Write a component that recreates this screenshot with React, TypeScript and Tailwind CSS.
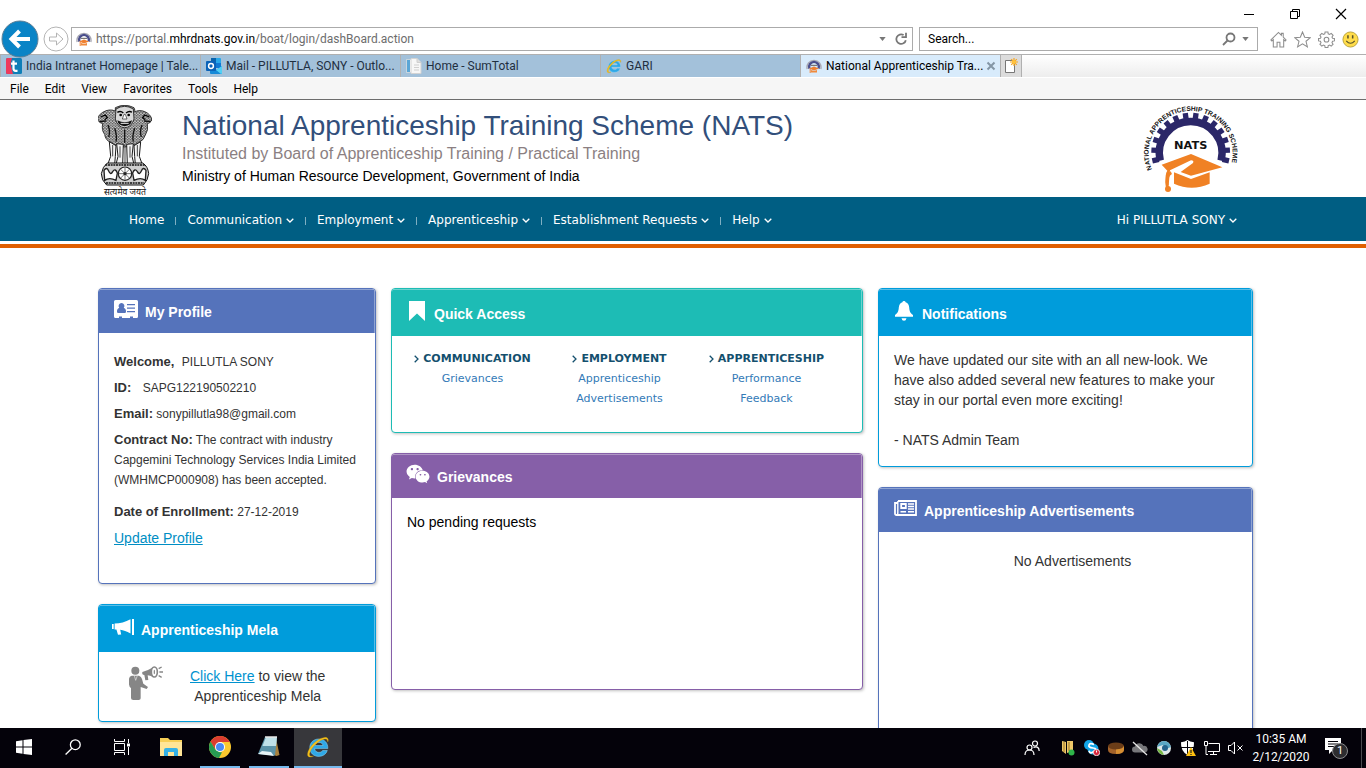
import React from "react";
import { FaWeixin } from "react-icons/fa";

const UI = "font-[Roboto,'Open_Sans',sans-serif]";

/* ---------- browser icons ---------- */

function SiteIcon() {
  return (
    <svg viewBox="0 0 16 16" className="size-4 shrink-0" aria-hidden="true">
      <path d="M1.2 11A7 7 0 1 1 14.8 11" fill="none" stroke="#a9a9b4" strokeWidth="1.4" />
      <path d="M3.4 10.5A4.9 4.9 0 1 1 12.6 10.5" fill="none" stroke="#4b4f8c" strokeWidth="2.4" />
      <path d="M5 7.4h6" stroke="#777" strokeWidth="1.2" />
      <path d="M3 10.5 8 8.6l5 2-5 2z" fill="#f08030" />
      <path d="M5 12v2.6h6V12l-3 1z" fill="#f08a3c" />
      <path d="M4.2 11v4" stroke="#f08030" strokeWidth="1" />
    </svg>
  );
}

function IeIcon({ className }: { className: string }) {
  return (
    <svg viewBox="0 0 24 24" className={className} aria-hidden="true">
      <path
        d="M21.8 13.6H8.6c.2 2.400 1.900 3.800 4.300 3.800 1.700 0 3-.6 3.700-1.900h4.700c-1.100 3.700-4.300 5.900-8.500 5.900-5.300 0-9-3.500-9-8.700 0-5.100 3.800-8.700 9-8.700 5.600 0 9.300 3.900 9 9.600zM8.700 10.500h8.300c-.3-1.900-1.800-3.100-4-3.100-2.300 0-3.900 1.200-4.300 3.100z"
        fill="#2fa8e6"
        stroke="#8fdcff"
        strokeWidth=".5"
      />
      <path
        d="M22.200 6.400C22.800 3.900 21.500 2 18.400 2.400 11 3.300 2 12.500 1.500 19c-.2 3.300 2.400 3.900 6 2.200-3 .6-4.400-.4-3.900-2.700C4.700 13.400 12.200 5.300 18 4.200c2.500-.5 3.600.4 3.400 2.200z"
        fill="#f6c21a"
        stroke="#b98a10"
        strokeWidth=".3"
      />
    </svg>
  );
}

function TalentIcon() {
  return (
    <svg viewBox="0 0 16 16" className="size-4 shrink-0" aria-hidden="true">
      <rect width="16" height="16" rx="1.500" fill="#0e7fb8" />
      <path d="M1.500 0H6l-1.500 6L7 16H1.500A1.500 1.500 0 0 1 0 14.500v-13A1.500 1.500 0 0 1 1.500 0z" fill="#ee3a5c" />
      <path d="M7.500 2.500v8q0 2.300 2.200 2.300H11.500M5 5.700h6" fill="none" stroke="#fff" strokeWidth="2.200" />
    </svg>
  );
}

function OutlookIcon() {
  return (
    <svg viewBox="0 0 16 16" className="size-4 shrink-0" aria-hidden="true">
      <rect x="5" y="0" width="10" height="10" rx="1" fill="#28a8ea" />
      <rect x="5" y="0" width="5" height="5" fill="#0a64ad" />
      <rect x="10" y="5" width="5" height="5" fill="#0f78d4" />
      <path d="M4 8l6 4 6-4v7a1 1 0 0 1-1 1H5a1 1 0 0 1-1-1z" fill="#1489d8" />
      <path d="M16 8v7a1 1 0 0 1-1 1L10 12z" fill="#50d0f5" />
      <rect x="0" y="3" width="10" height="10" rx="1" fill="#0a62b8" />
      <circle cx="5" cy="8" r="2.400" fill="none" stroke="#fff" strokeWidth="1.500" />
    </svg>
  );
}

function PagesIcon() {
  return (
    <svg viewBox="0 0 16 16" className="size-4 shrink-0" aria-hidden="true">
      <path d="M.5 1.500h7v13h-7z" fill="#fff" stroke="#c9d6df" />
      <path d="M1 2h3v12H1z" fill="#5aa6d6" />
      <path d="M5 .5h6l4 4v11H5z" fill="#f7f7f7" stroke="#d3d3d3" />
      <path d="M11 .5v4h4" fill="#ddd" stroke="#cfcfcf" />
      <path d="M8 7h5M8 9.500h5M8 12h5" stroke="#cfcfcf" />
    </svg>
  );
}

function NewTabIcon() {
  return (
    <svg viewBox="0 0 16 16" className="size-4" aria-hidden="true">
      <path d="M2.500 2.500h9v12h-9z" fill="#fff" stroke="#777" />
      <path d="M11 0v8M7 4h8M8.200 1.200l5.600 5.600M13.800 1.200 8.200 6.800" stroke="#f5a623" strokeWidth="1.200" />
      <circle cx="11" cy="4" r="2" fill="#ffc33d" />
    </svg>
  );
}

/* ---------- page drawings ---------- */

function Emblem() {
  return (
    <svg viewBox="0 0 162 276" className="h-[92px] w-[54px] shrink-0" role="img" aria-label="State Emblem of India">
      <defs>
        <pattern id="curl" width="9" height="8" patternUnits="userSpaceOnUse">
          <rect width="9" height="8" fill="#e4e4e4" />
          <path d="M0 2q3 4 5 0t4 1M1 7q2-4 4-1t4-1" stroke="#111" strokeWidth="2" fill="none" />
        </pattern>
      </defs>
      <g stroke="#1a1a1a" strokeWidth="2.500">
        <path
          d="M52 8Q80-6 108 8q4 8 2 12 20-8 38 4 16 12 12 24-4 6-12 8 4 20-6 34-4 16-20 22-10 10-22 8-20 12-40 0-14 2-22-8-16-6-18-24-10-12-6-32-10-2-14-10Q-4 34 14 22q20-12 38-4z"
          fill="url(#curl)"
        />
        <path d="M54 12q26-16 52 0l2 30q-8 26-28 26T52 42z" fill="#d8d8d8" />
      </g>
      <path d="M58 22q10-6 18 2M84 24q10-8 18-2" stroke="#000" strokeWidth="4" fill="none" />
      <circle cx="68" cy="30" r="4" />
      <circle cx="92" cy="30" r="4" />
      <path d="M78 28l-5 14h14l-5-14z" fill="#fff" stroke="#222" strokeWidth="2" />
      <path d="M58 46q22 12 44 0-2 16-22 18-20-2-22-18z" fill="#111" />
      <path d="M68 55h24" stroke="#eee" strokeWidth="3" />
      <path d="M8 36l14-6 6 8-8 6M154 36l-14-6-6 8 8 6" stroke="#000" strokeWidth="4" fill="none" />
      <path d="M4 50l20-2M158 50l-20-2M30 60q8 20 2 36M132 60q-8 20-2 36M50 70q8 24 4 40M110 70q-8 24-4 40M80 74v40" stroke="#111" strokeWidth="4" fill="none" />
      <g fill="#f4f4f4" stroke="#1a1a1a" strokeWidth="3">
        <path d="M34 110l4 44-8 22 20 2 2-24 2-32zM128 110l-4 44 8 22-20 2-2-24-2-32z" />
        <path d="M56 116l4 38-6 24h20l2-60zM106 116l-4 38 6 24H88l-2-60z" />
      </g>
      <path d="M44 120v34M66 124v34M96 124v34M118 120v34M81 120v56" stroke="#444" strokeWidth="3" />
      <path d="M28 174h106q16 10 18 32-2 20-16 34H26Q10 226 10 206q4-22 18-32z" fill="#cfcfcf" stroke="#111" strokeWidth="3" />
      <path d="M22 180h118M24 234h114" stroke="#111" strokeWidth="5" strokeDasharray="6 2" />
      <path d="M18 196q8-12 14 2t12 2q8-12 14 4l-4 22q-20-10-34 0zM144 196q-8-12-14 2t-12 2q-8-12-14 4l4 22q20-10 34 0z" fill="#fff" stroke="#222" strokeWidth="4" />
      <circle cx="81" cy="206" r="20" fill="#fff" stroke="#222" strokeWidth="3.500" />
      <path d="M81 188v36M63 206h36M68 193l26 26M94 193l-26 26" stroke="#555" strokeWidth="2.500" />
      <circle cx="81" cy="206" r="5" fill="#222" />
      <text x="81" y="270" textAnchor="middle" fontSize="26" fill="#111" fontFamily="Noto Sans Devanagari, Lohit Devanagari, Noto Sans, sans-serif">
        सत्यमेव जयते
      </text>
    </svg>
  );
}

const TEETH = Array.from({ length: 14 }, (_, i) => -103 + i * (206 / 13));

function NatsLogo() {
  return (
    <svg viewBox="186 21 288 270" className="h-[90px] w-24 shrink-0" role="img" aria-label="NATS">
      <defs>
        <path id="ring-text" d="M216 214A126 126 0 1 1 448 214" />
      </defs>
      <path d="M241 188A94 94 0 1 1 423 188" fill="none" stroke="#2b2768" strokeWidth="22" />
      <g fill="#2b2768">
        {TEETH.map((a) => (
          <rect key={a} x="324" y="44" width="16" height="20" transform={`rotate(${a} 332 162)`} />
        ))}
      </g>
      <text fontSize="20" fontWeight="700" fill="#111" fontFamily="Liberation Sans, Arial, sans-serif">
        <textPath href="#ring-text">NATIONAL APPRENTICESHIP TRAINING SCHEME</textPath>
      </text>
      <text x="332" y="153" textAnchor="middle" fontSize="34" fontWeight="700" fill="#111" fontFamily="DejaVu Sans, sans-serif">
        NATS
      </text>
      <path d="M245 200l88-32 94 40-94 25-31-11 37-27q4-8-6-8l-63 30-4 45h-8q-4-36 4-44z" fill="#f08124" />
      <path d="M282 223l51 20 56-20v34q-54 24-107 0z" fill="#f08124" />
      <circle cx="264" cy="273" r="9" fill="#f08124" />
      <path d="M262 268q-6-36 12-44" fill="none" stroke="#f08124" strokeWidth="9" />
    </svg>
  );
}

function CaretDown() {
  return (
    <svg viewBox="0 0 8 5" className="h-[5px] w-2" fill="none" stroke="currentColor" strokeWidth="1.300" aria-hidden="true">
      <path d="M.7.700 4 4 7.300.7" />
    </svg>
  );
}

function CaretRight() {
  return (
    <svg viewBox="0 0 5 8" className="h-2 w-[5px]" fill="none" stroke="currentColor" strokeWidth="1.300" aria-hidden="true">
      <path d="M.7.700 4 4 .7 7.300" />
    </svg>
  );
}

function CardIcon() {
  return (
    <svg viewBox="0 0 24 18" className="h-[18px] w-6 fill-white" aria-hidden="true">
      <path
        fillRule="evenodd"
        d="M1.500 0h21A1.500 1.500 0 0 1 24 1.500v15a1.500 1.500 0 0 1-1.500 1.500H19v-1.500h-3V18H8v-1.500H5V18H1.500A1.500 1.500 0 0 1 0 16.500v-15A1.500 1.500 0 0 1 1.500 0zM7.500 3a2.900 2.900 0 0 0-2.300 4.700C3.600 8.400 3 9.800 3 11.500 3 12.600 3.700 13 4.500 13h6c.8 0 1.500-.4 1.500-1.500 0-1.700-.6-3.100-2.200-3.800A2.900 2.900 0 0 0 7.500 3zM13 4v1.300h8V4zm0 3.500v1.300h8V7.500zm0 3.500v1.300h8V11z"
      />
    </svg>
  );
}

function BookmarkIcon() {
  return (
    <svg viewBox="0 0 16 20" className="h-5 w-4 fill-white" aria-hidden="true">
      <path d="M0 0h16v20l-8-7.500L0 20z" />
    </svg>
  );
}

function BellIcon() {
  return (
    <svg viewBox="0 0 18 20" className="h-5 w-[18px] fill-white" aria-hidden="true">
      <path d="M9 0a1.600 1.600 0 0 1 1.600 1.300C13 2.200 14 4 14.200 6.500 14.500 10.500 15.200 12 18 14v1.800H0V14c2.800-2 3.500-3.500 3.800-7.500C4 4 5 2.200 7.400 1.300A1.600 1.600 0 0 1 9 0zM6.500 17.200h5Q11 19.800 9 19.800t-2.500-2.600z" />
    </svg>
  );
}

function BullhornIcon() {
  return (
    <svg viewBox="0 0 22 16" className="h-4 w-[22px] fill-white" aria-hidden="true">
      <path d="M0 5h1.700v5H0zM2.600 4.600C8 4.500 13.500 3 18.500.2v14.200c-4-2.200-7-3.200-10.300-3.600l1 4.700-3.200.3-1.600-5.200H2.600zM20 0h2v16h-2z" />
    </svg>
  );
}

function NewsIcon() {
  return (
    <svg viewBox="0 0 23 16" className="h-4 w-[23px]" aria-hidden="true">
      <path d="M4 1h18v14H2.500Q1 15 1 13.500V3h3" fill="none" stroke="#fff" strokeWidth="1.800" />
      <path d="M3.800 1v11.500Q3.800 15 2.500 15" fill="none" stroke="#fff" strokeWidth="1.400" />
      <path d="M7.200 4h4.600v4H7.200z" fill="none" stroke="#fff" strokeWidth="1.800" />
      <path d="M14 4h6M14 6.500h6M14 9h6M6.500 11.800H12M14 11.800h6" stroke="#fff" strokeWidth="1.500" />
    </svg>
  );
}

function AnnouncerIcon() {
  return (
    <svg viewBox="0 0 102 102" className="h-[34px] w-[34px] shrink-0" aria-hidden="true">
      <circle cx="19" cy="14" r="12" fill="#868686" />
      <path d="M8 29h22q7 2 9 10l4 14 14 10-4 6-18-6v34q0 5-6 5H13q-7 0-7-6V66Q-1 62 0 50V38q1-7 8-9z" fill="#868686" />
      <path d="M16 29l4 14 5-14" fill="none" stroke="#e5e5e5" strokeWidth="2" />
      <path d="M40 18q16-4 34-15v31Q62 28 56 28l2 14-9 1-3-16q-8 0-6-9z" fill="#868686" />
      <ellipse cx="76" cy="18" rx="9" ry="15" fill="#fff" stroke="#868686" strokeWidth="5" />
      <ellipse cx="76" cy="18" rx="2" ry="7" fill="#868686" />
      <path d="M89 8l9-5M91 18h11M89 29l9 5" stroke="#868686" strokeWidth="4" />
    </svg>
  );
}

/* ---------- browser chrome ---------- */

function Tab({ icon, title, active }: { icon: React.ReactNode; title: string; active?: boolean }) {
  return (
    <div
      className={
        active
          ? "flex h-full w-[200px] items-center border-l border-[#b0b0b0] bg-[#d8ebfb]"
          : "flex h-full w-[200px] items-center border-l border-[#b0b0b0] bg-[#a3c1da]"
      }
    >
      <button type="button" className={`flex min-w-0 flex-1 items-center gap-1 pl-[5px] text-left ${active ? "text-black" : "text-[#1f2f3f]"}`}>
        {icon}
        <span className="whitespace-nowrap">{title}</span>
      </button>
      {active && (
        <button type="button" aria-label="Close tab" className="mr-1 flex items-center">
          <svg viewBox="0 0 10 10" className="size-2.5">
            <path d="M1.500 1.500l7 7M8.500 1.500l-7 7" stroke="#8496a5" strokeWidth="2" />
          </svg>
        </button>
      )}
    </div>
  );
}

const MENUS = ["File", "Edit", "View", "Favorites", "Tools", "Help"];

function BrowserChrome() {
  return (
    <header className={`shrink-0 border-b border-[#6d6d6d] text-xs ${UI}`}>
      <div className="flex h-[26px] items-center justify-end bg-white pr-[19px] pt-0.5">
        <div className="flex items-center gap-[34px]">
          <button type="button" aria-label="Minimize">
            <svg viewBox="0 0 12 12" className="size-3"><path d="M1 6.500h10" stroke="#000" /></svg>
          </button>
          <button type="button" aria-label="Restore">
            <svg viewBox="0 0 12 12" className="size-3" fill="none" stroke="#000">
              <path d="M1.500 3.500h7v7h-7zM3.500 3.500v-2h7v7h-2" />
            </svg>
          </button>
          <button type="button" aria-label="Close">
            <svg viewBox="0 0 12 12" className="size-3"><path d="M1 1l10 10M11 1 1 11" stroke="#000" strokeWidth="1.200" /></svg>
          </button>
        </div>
      </div>
      <div className="mb-0.5 flex h-[26px] items-center bg-white pr-[7px]">
        <div className="flex w-[71px] shrink-0 items-center gap-1 pl-px">
          <button type="button" aria-label="Back" className="relative z-10">
            <svg viewBox="0 0 38 38" className="-my-2 size-[38px]">
              <circle cx="19" cy="19" r="18" fill="#0a84c6" stroke="#5d7f95" />
              <path d="M29 19H11M18.500 11l-8 8 8 8" fill="none" stroke="#fff" strokeWidth="4" />
            </svg>
          </button>
          <button type="button" aria-label="Forward">
            <svg viewBox="0 0 26 26" className="size-[26px]" fill="none" stroke="#b4b4b4">
              <circle cx="13" cy="13" r="12" />
              <path d="M6.500 11h7V7l6.500 6-6.500 6v-4h-7z" />
            </svg>
          </button>
        </div>
        <div className="flex h-6 flex-1 items-center gap-1 border border-[#ababab] px-1">
          <SiteIcon />
          <div role="textbox" aria-label="Address" className="flex-1 whitespace-nowrap text-[#6d6d6d]">
            https://portal.<span className="text-black">mhrdnats.gov.in</span>/boat/login/dashBoard.action
          </div>
          <button type="button" aria-label="Show addresses" className="pr-1">
            <svg viewBox="0 0 8 5" className="h-1 w-[7px]"><path d="M0 0h8L4 5z" fill="#777" /></svg>
          </button>
          <button type="button" aria-label="Refresh">
            <svg viewBox="0 0 14 14" className="size-3.5" fill="none" stroke="#777" strokeWidth="1.800">
              <path d="M11.800 8.200A4.800 4.800 0 1 1 9.600 3M12 .8v4.400H7.500" />
            </svg>
          </button>
        </div>
        <div className="ml-1.5 flex h-6 w-[339px] items-center border border-[#ababab] px-2">
          <input aria-label="Search" placeholder="Search..." className="min-w-0 flex-1 outline-none placeholder:text-black" />
          <button type="button" aria-label="Search" className="mr-1.5">
            <svg viewBox="0 0 14 14" className="size-3.5" fill="none" stroke="#777" strokeWidth="1.800">
              <circle cx="8.500" cy="5.500" r="4" />
              <path d="M5.500 8.500 1 13" />
            </svg>
          </button>
          <button type="button" aria-label="Search options">
            <svg viewBox="0 0 8 5" className="h-1 w-[7px]"><path d="M0 0h8L4 5z" fill="#777" /></svg>
          </button>
        </div>
        <div className="ml-3 flex items-center gap-[7px]">
          <button type="button" aria-label="Home page">
            <svg viewBox="0 0 18 18" className="size-[17px]" fill="none" stroke="#8d8d8d" strokeWidth="1.100">
              <path d="M1 9.500 9 1.500l3 3V2.500h2v4l3 3-1 1-1.500-1.300V17h-4v-5h-3v5h-4V9.200L2 10.500z" />
            </svg>
          </button>
          <button type="button" aria-label="Favorites bar">
            <svg viewBox="0 0 18 18" className="size-[17px]" fill="none" stroke="#8d8d8d" strokeWidth="1.100">
              <path d="M9 1l2.300 5.600 6 .4-4.600 3.900 1.500 5.900L9 13.600l-5.200 3.200 1.500-5.900L.7 7l6-.4z" />
            </svg>
          </button>
          <button type="button" aria-label="Settings">
            <svg viewBox="0 0 18 18" className="size-[17px]" fill="none" stroke="#8d8d8d" strokeWidth="1.100">
              <path d="M7.500 1h3l.3 2 1.500.7 1.700-1.200L16 4.600l-1.200 1.700.6 1.400 2 .3v2.500l-2 .4-.6 1.500 1.200 1.600-2 2-1.700-1.200-1.500.7-.3 2h-3l-.3-2-1.500-.7L4 16l-2-2 1.200-1.600-.6-1.500-2-.4V8l2-.3.6-1.400L2 4.600 4 2.500l1.700 1.200L7.200 3z" />
              <circle cx="9" cy="9.200" r="2.500" />
            </svg>
          </button>
          <button type="button" aria-label="Send feedback">
            <svg viewBox="0 0 18 18" className="size-[17px]">
              <circle cx="9" cy="9" r="8" fill="#ffdc4a" stroke="#b8a23a" />
              <path d="M6.300 4.500v3.500M11.300 4.500v3.500" stroke="#55502a" strokeWidth="1.600" />
              <path d="M4.500 10.500q4.500 5 9 0" fill="none" stroke="#55502a" strokeWidth="1.200" />
            </svg>
          </button>
        </div>
      </div>
      <div className="flex h-[23px] border-t border-[#b0b0b0] bg-linear-to-b from-white to-[#ededed]">
        <Tab icon={<TalentIcon />} title="India Intranet Homepage | Tale..." />
        <Tab icon={<OutlookIcon />} title="Mail - PILLUTLA, SONY - Outlo..." />
        <Tab icon={<PagesIcon />} title="Home - SumTotal" />
        <Tab icon={<IeIcon className="size-4 shrink-0" />} title="GARI" />
        <Tab icon={<SiteIcon />} title="National Apprenticeship Tra..." active />
        <button type="button" aria-label="New tab" className="flex w-[22px] items-center justify-center border-x border-[#b0b0b0] bg-[#dcdcdc]">
          <NewTabIcon />
        </button>
      </div>
      <nav aria-label="Browser menu" className="flex h-[22px] items-center gap-4 border-t border-white bg-[#f6f6f6] pl-2.5 text-black">
        {MENUS.map((m) => (
          <button key={m} type="button">{m}</button>
        ))}
      </nav>
    </header>
  );
}

/* ---------- portal page ---------- */

const NAV = [
  { label: "Home" },
  { label: "Communication", menu: true },
  { label: "Employment", menu: true },
  { label: "Apprenticeship", menu: true },
  { label: "Establishment Requests", menu: true },
  { label: "Help", menu: true },
];

function Masthead() {
  return (
    <div className="flex h-[97px] items-start overflow-hidden pr-32 pl-[98px] pt-[5px]">
      <Emblem />
      <div className="ml-[30px] flex-1 pt-[5px]">
        <h1 className="text-[28px] leading-8 text-[#324f7b]">National Apprenticeship Training Scheme (NATS)</h1>
        <p className="text-base leading-6 text-[#8b7f82]">Instituted by Board of Apprenticeship Training / Practical Training</p>
        <p className="text-sm leading-5 text-black">Ministry of Human Resource Development, Government of India</p>
      </div>
      <NatsLogo />
    </div>
  );
}

function MainNav() {
  return (
    <>
      <nav aria-label="Portal" className="flex h-11 items-center justify-between bg-[#005e83] pt-0.5 pr-[129px] pl-[129px] font-['DejaVu_Sans',Verdana,sans-serif] text-xs text-white">
        <ul className="flex items-center">
          {NAV.map((n, i) => (
            <li key={n.label} className="flex items-center">
              {i > 0 && <span className="mx-[11px] mt-0.5 h-2 w-px bg-[#7fafc2]" />}
              <button type="button" className="flex items-center gap-1">
                {n.label}
                {n.menu && <CaretDown />}
              </button>
            </li>
          ))}
        </ul>
        <button type="button" className="flex items-center gap-1">
          Hi PILLUTLA SONY
          <CaretDown />
        </button>
      </nav>
      <div className="mt-[3px] h-1 bg-[#e05f00]" />
    </>
  );
}

type Tone = "indigo" | "teal" | "purple" | "sky";

const BORDER: Record<Tone, string> = {
  indigo: "border-[#5573bb]",
  teal: "border-[#1dbcb5]",
  purple: "border-[#865fa8]",
  sky: "border-[#009cdb]",
};
const FILL: Record<Tone, string> = {
  indigo: "bg-[#5573bb]",
  teal: "bg-[#1dbcb5]",
  purple: "bg-[#865fa8]",
  sky: "bg-[#009cdb]",
};

interface CardProps {
  tone: Tone;
  icon: React.ReactNode;
  title: string;
  tall?: boolean;
  pad: string;
  className?: string;
  children: React.ReactNode;
}

function Card({ tone, icon, title, tall, pad, className = "", children }: CardProps) {
  return (
    <section className={`overflow-hidden rounded border bg-white shadow-[1px_1px_3px_rgba(0,0,0,0.25)] ${BORDER[tone]} ${className}`}>
      <div className={`flex items-center border-t border-r border-white/35 text-white ${FILL[tone]} ${pad} ${tall ? "h-[47px] pt-0.5" : "h-11"}`}>
        <span className="mb-1.5">{icon}</span>
        <h2 className="text-sm font-bold">{title}</h2>
      </div>
      {children}
    </section>
  );
}

const QUICK = [
  { head: "COMMUNICATION", lines: ["Grievances"] },
  { head: "EMPLOYMENT", lines: ["Apprenticeship", "Advertisements"] },
  { head: "APPRENTICESHIP", lines: ["Performance", "Feedback"] },
];

function Dashboard() {
  return (
    <div className="mr-[113px] ml-[98px] mt-10 grid grid-cols-[278fr_472fr_375fr] items-start gap-x-[15px] text-[#333]">
      <div className="flex flex-col gap-5">
        <Card tone="indigo" icon={<CardIcon />} title="My Profile" pad="gap-[7px] pl-[15px]" className="h-[296px]">
          <div className="space-y-1.5 px-[15px] pt-[19px] text-xs leading-5">
            <p><b className="mr-1 text-[13px]">Welcome,</b> PILLUTLA SONY</p>
            <p><b className="mr-2 text-[13px]">ID:</b> SAPG122190502210</p>
            <p><b className="text-[13px]">Email:</b> sonypillutla98@gmail.com</p>
            <p><b className="text-[13px]">Contract No:</b> The contract with industry Capgemini Technology Services India Limited (WMHMCP000908) has been accepted.</p>
            <p className="pt-1.5"><b className="text-[13px]">Date of Enrollment:</b> 27-12-2019</p>
            <p className="text-sm leading-5"><a href="#profile" className="text-[#008ec4] underline">Update Profile</a></p>
          </div>
        </Card>
        <Card tone="sky" icon={<BullhornIcon />} title="Apprenticeship Mela" tall pad="gap-[7px] pl-[13px]" className="h-[118px]">
          <div className="flex items-start pt-3.5 pl-[30px]">
            <AnnouncerIcon />
            <p className="ml-[27px] text-center text-sm leading-5">
              <a href="#mela" className="text-[#0092cf] underline">Click Here</a> to view the
              <br />
              Apprenticeship Mela
            </p>
          </div>
        </Card>
      </div>

      <div className="flex flex-col gap-5">
        <Card tone="teal" icon={<BookmarkIcon />} title="Quick Access" tall pad="gap-[9px] pl-[17px]" className="h-[145px]">
          <div className="grid grid-cols-3 pt-[13px] pr-[22px] pl-[7px] text-center font-['DejaVu_Sans',Verdana,sans-serif] text-[11px] leading-5">
            {QUICK.map((q) => (
              <div key={q.head}>
                <h3 className="flex items-center justify-center gap-1 font-bold text-[#14506e]">
                  <CaretRight />
                  {q.head}
                </h3>
                <a href="#quick" className="text-[#337ab7]">
                  {q.lines.map((l) => (
                    <span key={l} className="block">{l}</span>
                  ))}
                </a>
              </div>
            ))}
          </div>
        </Card>
        <Card tone="purple" icon={<FaWeixin className="size-6" aria-hidden="true" />} title="Grievances" pad="gap-[7px] pl-3.5" className="h-[237px]">
          <p className="px-[15px] pt-3.5 text-sm leading-5 text-black">No pending requests</p>
        </Card>
      </div>

      <div className="flex flex-col gap-5">
        <Card tone="sky" icon={<BellIcon />} title="Notifications" tall pad="gap-[9px] pl-4" className="h-[179px]">
          <div className="px-[15px] pt-3.5 text-sm leading-5">
            <p>We have updated our site with an all new-look. We have also added several new features to make your stay in our portal even more exciting!</p>
            <p className="mt-5">- NATS Admin Team</p>
          </div>
        </Card>
        <Card tone="indigo" icon={<NewsIcon />} title="Apprenticeship Advertisements" pad="gap-[7px] pl-[15px]" className="h-[300px]">
          <p className="pt-[19px] pl-3.5 text-center text-sm leading-5">No Advertisements</p>
        </Card>
      </div>
    </div>
  );
}

/* ---------- taskbar ---------- */

function TaskButton({ label, running, children }: { label: string; running?: boolean; children: React.ReactNode }) {
  return (
    <button
      type="button"
      aria-label={label}
      className={`mr-[9px] flex h-10 w-10 items-center justify-center border-b-2 ${running ? "border-[#76b9ed]" : "border-transparent"}`}
    >
      {children}
    </button>
  );
}

function Taskbar() {
  return (
    <footer className={`flex h-10 shrink-0 items-center justify-between bg-[#04020a] text-white ${UI}`}>
      <div className="flex h-10 items-center pl-1">
        <TaskButton label="Start">
          <svg viewBox="0 0 16 16" className="size-4 fill-white"><path d="M0 2.200 6.500 1.300v6.200H0zM7.500 1.100 16 0v7.500H7.500zM0 8.500h6.500v6.200L0 13.800zM7.500 8.500H16V16l-8.500-1.100z" /></svg>
        </TaskButton>
        <TaskButton label="Search">
          <svg viewBox="0 0 16 16" className="size-4" fill="none" stroke="#fff" strokeWidth="1.300"><circle cx="10.300" cy="5.700" r="4.900" /><path d="M7 9.200.6 15.500" /></svg>
        </TaskButton>
        <TaskButton label="Task View">
          <svg viewBox="0 0 16 16" className="size-4" fill="none" stroke="#fff"><path d="M.5 0v2.500h10V0M.5 16v-2.500h10V16M.5 4.500h10v7H.5zM14.500 0v4M14.500 8v8" /><path d="M13 4.500h3v3h-3z" fill="#fff" stroke="none" /></svg>
        </TaskButton>
        <TaskButton label="File Explorer">
          <svg viewBox="0 0 22 18" className="h-[18px] w-[22px]"><path d="M0 0h8l2 2h12v16H0z" fill="#f7cf56" /><path d="M0 4h22v14H0z" fill="#ffe597" /><path d="M4 18v-6q0-2 2-2h10q2 0 2 2v6h-4v-4H8v4z" fill="#35b1e6" /></svg>
        </TaskButton>
        <TaskButton label="Chrome" running>
          <svg viewBox="0 0 22 22" className="size-[22px]">
            <circle cx="11" cy="11" r="11" fill="#fbc92e" />
            <path d="M1.500 5.500A11 11 0 0 1 20.500 5.500L20.800 6H11L6.200 13.500z" fill="#dc3d30" />
            <path d="M1.500 5.500 6.500 13.700 11 16.200H13L10 22A11 11 0 0 1 1.500 5.500z" fill="#279c52" />
            <circle cx="11" cy="11" r="5" fill="#fff" />
            <circle cx="11" cy="11" r="4" fill="#4a8af4" />
          </svg>
        </TaskButton>
        <TaskButton label="Notepad" running>
          <svg viewBox="0 0 24 22" className="h-[22px] w-6">
            <path d="M19 2l3.500 17-3 1-6-2z" fill="#a8803c" />
            <path d="M8 1h12l-2 18.500L1 18z" fill="#5b93a8" />
            <path d="M9 1h11l-1 9H5.500z" fill="#bfe0e8" />
            <path d="M1 18l4-3 9 1 3 4z" fill="#e7f3f6" />
            <path d="M8 1h12" stroke="#e6e6e6" strokeWidth="1.500" />
          </svg>
        </TaskButton>
        <button type="button" aria-label="Internet Explorer" className="-ml-1 flex h-10 w-12 items-center justify-center border-b-2 border-[#76b9ed] bg-[#37373b]">
          <IeIcon className="size-6" />
        </button>
      </div>
      <div className="flex h-10 items-center">
        <div className="flex items-center gap-2">
          <svg viewBox="0 0 16 16" className="mr-3 size-4" fill="none" stroke="#fff" strokeWidth="1.200"><circle cx="11" cy="3.500" r="2.500" /><circle cx="5.500" cy="7.500" r="2.500" /><path d="M1 15q0-5 4.500-5T10 15M9.500 7.500Q15 5.500 15.200 11" /></svg>
          <svg viewBox="0 0 16 16" className="size-4"><path d="M2 1l4 1v12l-4-3zM7 1h6v10l-6 2z" fill="#efc869" /><path d="M4 2v10M9 2v9" stroke="#9a7222" /><circle cx="11.500" cy="12.500" r="3" fill="#2fb54a" /></svg>
          <svg viewBox="0 0 16 16" className="size-4"><circle cx="5" cy="5" r="5" fill="#12a5e6" /><circle cx="9" cy="9" r="5.500" fill="#12a5e6" /><path d="M10 4.500Q6 2.500 5 5t4 3 1 3.500-5-.8" fill="none" stroke="#fff" strokeWidth="1.700" /><circle cx="12.500" cy="12.500" r="3.200" fill="#d7263d" stroke="#fff" strokeWidth=".8" /><path d="M12.500 10.500v2" stroke="#fff" /></svg>
          <svg viewBox="0 0 16 16" className="size-4"><path d="M0 6v4q0 4 8 4t8-4V6z" fill="#a3622a" /><ellipse cx="8" cy="6" rx="8" ry="3.500" fill="#6b3d18" /><path d="M8 9.500Q15 9 16 6v4q-1 4-8 4z" fill="#d68f33" /></svg>
          <svg viewBox="0 0 16 16" className="size-4"><path d="M3 12.500a3 3 0 0 1 0-6 4.500 4.500 0 0 1 8.500-.5 3.300 3.300 0 0 1 1.500 6.500z" fill="#77777b" /><path d="M1 2l14 13" stroke="#e5e5e5" strokeWidth="1.300" /></svg>
          <svg viewBox="0 0 16 16" className="size-4"><circle cx="8" cy="8" r="7" fill="#dfe8ea" /><path d="M1 7Q3 1 8 1t7 6l-5 2-3-4z" fill="#5aa6c4" /><path d="M8 15q-6-1-7-7l5 3z" fill="#76b843" /><circle cx="9" cy="8" r="3" fill="#24628c" /></svg>
          <svg viewBox="0 0 16 16" className="size-4"><path d="M7.500 0Q10 2 14 2.200 14.500 11 7.500 15 .5 11 1 2.200 5 2 7.500 0z" fill="#fff" /><path d="M7.500 1v13M1 7.500h13" stroke="#04020a" /><path d="M11 7l5 9H6z" fill="#fdc010" /><path d="M11 10v3M11 14v1" stroke="#222" strokeWidth="1.200" /></svg>
          <svg viewBox="0 0 16 16" className="size-4" fill="none" stroke="#fff"><path d="M4.500 3.500h11v8H4M9.500 11.500v3M6 14.500h7M.5 1.500h3v4h-3zM2 5.500v9h2" /></svg>
          <svg viewBox="0 0 16 16" className="size-4" fill="none" stroke="#fff"><path d="M.5 5.500h2.500L6.500 2v12L3 10.500H.5zM9.500 5.500l5 5M14.500 5.500l-5 5" /></svg>
        </div>
        <div className="w-[74px] text-center text-xs leading-[18px]">
          <div>10:35 AM</div>
          <div>2/12/2020</div>
        </div>
        <button type="button" aria-label="1 new notification" className="relative ml-1.5 mr-[13px] h-6 w-6">
          <svg viewBox="0 0 24 24" className="size-6"><path d="M1 2h16v12H9l-4 4v-4H1z" fill="#fff" /><path d="M4 5.500h10M4 8h10M4 10.500h6" stroke="#04020a" /><circle cx="16" cy="15" r="7.500" fill="#2d2d30" stroke="#8b8b8d" /></svg>
          <span className="absolute top-[7px] left-[13px] text-[11px] leading-4">1</span>
        </button>
        <span className="mr-1 h-10 w-px bg-[#4a4a4e]" />
      </div>
    </footer>
  );
}

export default function App() {
  return (
    <div className="flex h-screen flex-col overflow-hidden bg-white font-['Liberation_Sans',Arial,sans-serif]">
      <BrowserChrome />
      <main className="min-h-0 flex-1 overflow-hidden">
        <Masthead />
        <MainNav />
        <Dashboard />
      </main>
      <Taskbar />
    </div>
  );
}
